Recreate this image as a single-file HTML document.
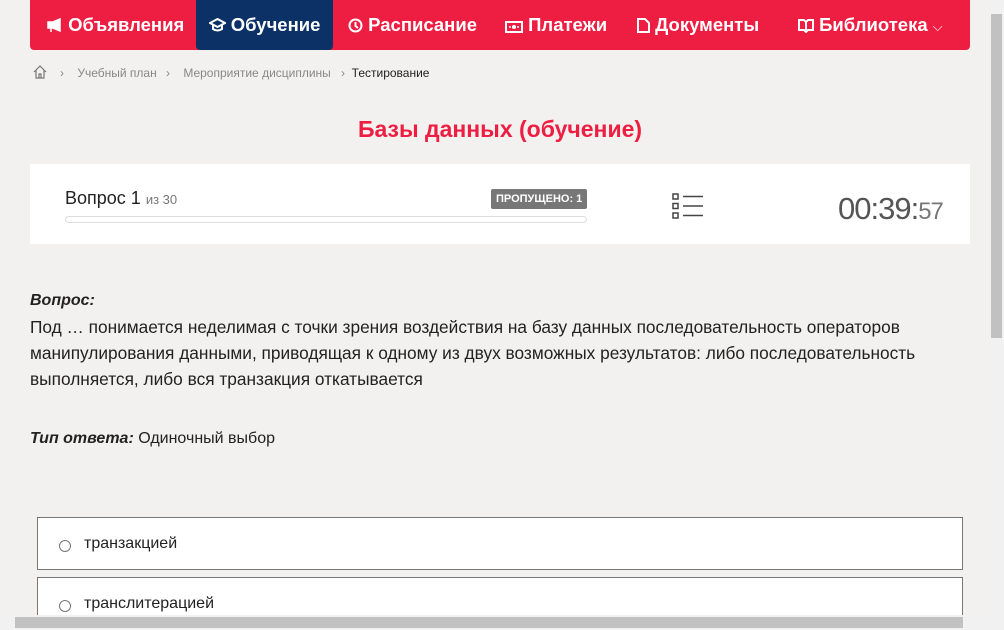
<!DOCTYPE html>
<html><head><meta charset="utf-8"><style>
html,body{margin:0;width:1004px;height:630px;overflow:hidden}
body{background:#f2f1ef;font-family:"Liberation Sans",sans-serif;position:relative}
.nav{position:absolute;left:30px;top:0;width:940px;height:50px;background:#ee1d42;border-radius:0 0 4px 4px}
.nav div{position:absolute;top:0;height:50px;line-height:50px;color:#fff;font-size:18.5px;font-weight:bold;white-space:nowrap}
.nav svg{vertical-align:-2px}
.nav .act{background:#0b3166;border-radius:0 0 4px 4px}
.bc{position:absolute;top:66px;font-size:12px;color:#888}
.title{position:absolute;top:116px;left:0;width:1000px;text-align:center;color:#ee1d42;font-size:23px;font-weight:bold}
.card{position:absolute;left:30px;top:164px;width:940px;height:80px;background:#fff}
.q{position:absolute;left:30px;font-size:17.3px;color:#222;line-height:26px}
.opt{position:absolute;left:37px;width:924px;background:#fff;border:1px solid #777}
.opt span{position:absolute;left:46px;top:17px;font-size:16px;color:#222}
.opt i{position:absolute;left:21px;top:22px;width:10px;height:10px;border:1px solid #777;border-radius:50%}
</style></head><body>
<div class="nav">
<div style="left:17px"><svg width="16" height="15"><path d="M1 4h5l7-3v12l-7-3H1z M4 10v4" fill="#fff" stroke="#fff" stroke-width="1.5"/></svg> Объявления</div>
<div class="act" style="left:166px;width:137px;text-align:center"><svg width="17" height="15"><path d="M1 5l7.5-4 7.5 4-7.5 4z" fill="none" stroke="#fff" stroke-width="2"/><path d="M4 7v4q4.5 3 9 0V7" fill="none" stroke="#fff" stroke-width="2"/></svg> Обучение</div>
<div style="left:318px"><svg width="15" height="15"><circle cx="7.5" cy="7.5" r="6" fill="none" stroke="#fff" stroke-width="2"/><path d="M7.5 4v4l2.5 2" stroke="#fff" stroke-width="2" fill="none"/></svg> Расписание</div>
<div style="left:475px"><svg width="18" height="12"><rect x="1" y="1" width="16" height="10" fill="none" stroke="#fff" stroke-width="2"/><circle cx="9" cy="6" r="2" fill="#fff"/><circle cx="5" cy="6" r="1" fill="#fff"/><circle cx="13" cy="6" r="1" fill="#fff"/></svg> Платежи</div>
<div style="left:607px"><svg width="13" height="15"><path d="M1 1h7l4 4v9H1z" fill="none" stroke="#fff" stroke-width="2"/></svg> Документы</div>
<div style="left:768px"><svg width="16" height="15"><path d="M1 2h5l2 2 2-2h5v10h-5l-2 2-2-2H1z M8 4v10" fill="none" stroke="#fff" stroke-width="2"/></svg> Библиотека <span style="font-weight:normal;font-size:13px">⌵</span></div>
</div>
<svg style="position:absolute;left:33px;top:65px" width="14" height="14"><path d="M1 7L7 1l6 6M3 5v8h8V5M6 13V9h2v4" fill="none" stroke="#777" stroke-width="1.2"/></svg>
<div class="bc" style="left:60px">›&nbsp;&nbsp;&nbsp; Учебный план</div>
<div class="bc" style="left:166px">›&nbsp;&nbsp;&nbsp; Мероприятие дисциплины</div>
<div class="bc" style="left:341px">›&nbsp; <span style="color:#222">Тестирование</span></div>
<div class="title">Базы данных (обучение)</div>
<div class="card">
<div style="position:absolute;left:35px;top:24px;font-size:18px;color:#222">Вопрос 1 <span style="font-size:13px;color:#777">из 30</span></div>
<div style="position:absolute;left:461px;top:25px;height:20px;line-height:20px;padding:0 5px;background:#777;color:#fff;font-size:11px;font-weight:bold;border-radius:2px">ПРОПУЩЕНО: 1</div>
<div style="position:absolute;left:35px;top:52px;width:520px;height:5px;border:1px solid #ddd;border-radius:4px"></div>
<svg style="position:absolute;left:642px;top:29px" width="32" height="27"><g fill="none" stroke="#444" stroke-width="1.5"><rect x="1" y="1" width="5" height="5"/><rect x="1" y="10.5" width="5" height="5"/><rect x="1" y="20" width="5" height="5"/><path d="M11 3.5H31M11 13H31M11 22.5H31"/></g></svg>
<div style="position:absolute;left:808px;top:27px;font-size:31px;color:#555;letter-spacing:-1px">00:39:<span style="font-size:24px;color:#777">57</span></div>
</div>
<div class="q" style="top:288px;font-weight:bold;font-style:italic;font-size:16px">Вопрос:</div>
<div class="q" style="top:314px;width:945px">Под … понимается неделимая с точки зрения воздействия на базу данных последовательность операторов манипулирования данными, приводящая к одному из двух возможных результатов: либо последовательность выполняется, либо вся транзакция откатывается</div>
<div class="q" style="top:426px;font-size:16px"><b><i>Тип ответа:</i></b> Одиночный выбор</div>
<div class="opt" style="top:517px;height:51px"><i></i><span>транзакцией</span></div>
<div class="opt" style="top:577px;height:60px"><i style="top:22px"></i><span>транслитерацией</span></div>
<div style="position:absolute;right:0;top:0;width:15px;height:615px;background:#f1f1f1"><div style="position:absolute;left:2px;top:14px;width:11px;height:324px;background:#c1c1c1"></div></div>
<div style="position:absolute;left:0;top:615px;width:1004px;height:15px;background:#f1f1f1"><div style="position:absolute;left:15px;top:2px;width:948px;height:11px;background:#c1c1c1"></div></div>
</body></html>
